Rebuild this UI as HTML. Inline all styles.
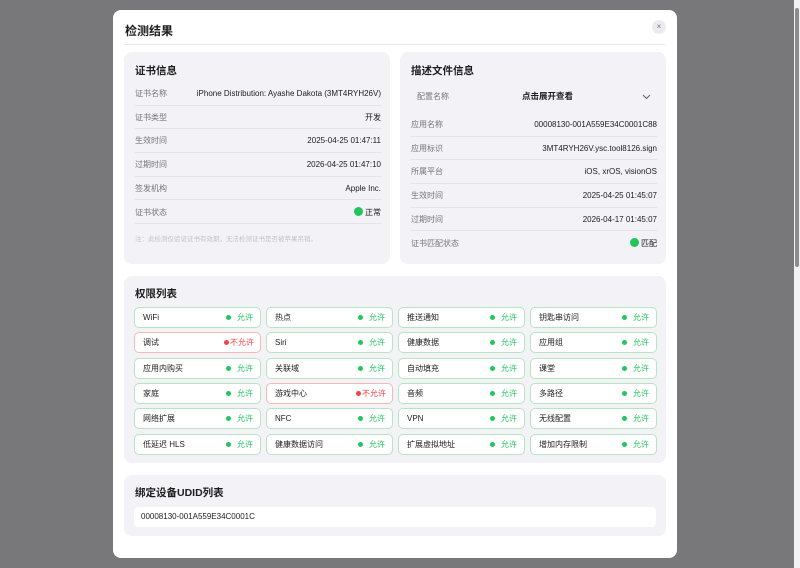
<!DOCTYPE html>
<html><head><meta charset="utf-8"><style>
*{margin:0;padding:0;box-sizing:border-box}
body{width:800px;height:568px;background:#78787a;font-family:"Liberation Sans","Noto Sans CJK SC",sans-serif;position:relative;overflow:hidden;color:#1d1d1f}
.sb{position:absolute;left:794px;top:0;width:6px;height:568px;background:#f2f2f2}
.sbt{position:absolute;left:795px;top:8px;width:4px;height:259px;background:#8c8c8c;border-radius:2px}
.modal{position:absolute;left:113px;top:10px;width:564px;height:548px;background:#fff;border-radius:8px}
.a{position:absolute}
.title{left:12px;top:12px;font-size:12px;font-weight:bold}
.hr{left:11px;top:34px;width:542px;height:1px;background:#e8e8ec}
.close{left:539px;top:10px;width:14px;height:14px;border-radius:7px;background:#ececf0;font-size:8px;color:#777;text-align:center;line-height:14px}
.card{position:absolute;background:#f2f2f7;border-radius:8px}
.ct{position:absolute;left:11px;top:11px;font-size:10.5px;font-weight:bold}
.row{position:absolute;left:11px;right:9px;height:23.7px;font-size:8px;line-height:23px;border-bottom:1px solid #e2e2e7}
.row .l{color:#777;position:absolute;left:0}
.row .v{position:absolute;right:0;color:#1d1d1f}
.g{color:#22c55e}
.dot{display:inline-block;width:9px;height:9px;border-radius:5px;background:#22c55e;vertical-align:-1px;margin-right:2px}
.p{position:absolute;width:127px;height:21px;background:#fff;border:1px solid #b6e6c1;border-radius:5px;font-size:8px;line-height:19px}
.p.r{border-color:#f5b8b8}
.p .n{position:absolute;left:8px}
.p .d{position:absolute;left:91px;top:7px;width:5px;height:5px;border-radius:3px;background:#22c55e}
.p .s{position:absolute;right:7px;color:#22c55e}
.p.r .d{left:89px;background:#ef4444}
.p.r .s{color:#ef4444;right:6px}
</style></head><body>
<div class="sb"></div><div class="sbt"></div>
<div class="modal">
<div class="a title">检测结果</div>
<div class="a close">×</div>
<div class="a hr"></div>

<div class="card" style="left:11px;top:42px;width:266px;height:212px">
<div class="ct">证书信息</div>
<div class="row" style="top:30px"><span class="l">证书名称</span><span class="v">iPhone Distribution: Ayashe Dakota (3MT4RYH26V)</span></div>
<div class="row" style="top:53.7px"><span class="l">证书类型</span><span class="v">开发</span></div>
<div class="row" style="top:77.4px"><span class="l">生效时间</span><span class="v">2025-04-25 01:47:11</span></div>
<div class="row" style="top:101.1px"><span class="l">过期时间</span><span class="v">2026-04-25 01:47:10</span></div>
<div class="row" style="top:124.8px"><span class="l">签发机构</span><span class="v">Apple Inc.</span></div>
<div class="row" style="top:148.5px"><span class="l">证书状态</span><span class="v g"><span class="dot"></span>正常</span></div>
<div class="a" style="left:11px;top:181px;font-size:6.5px;color:#c4c4c8">注：此检测仅验证证书有效期，无法检测证书是否被苹果吊销。</div>
</div>

<div class="card" style="left:287px;top:42px;width:266px;height:212px">
<div class="ct">描述文件信息</div>
<div class="a" style="left:17px;top:39px;font-size:8px;color:#777">配置名称</div>
<div class="a" style="left:122px;top:38px;font-size:8.5px;font-weight:bold">点击展开查看</div>
<svg class="a" style="left:242px;top:42px" width="9" height="6" viewBox="0 0 9 6"><path d="M1 1l3.5 3.5L8 1" fill="none" stroke="#666" stroke-width="1.1"/></svg>
<div class="row" style="top:61px"><span class="l">应用名称</span><span class="v">00008130-001A559E34C0001C88</span></div>
<div class="row" style="top:84.7px"><span class="l">应用标识</span><span class="v">3MT4RYH26V.ysc.tool8126.sign</span></div>
<div class="row" style="top:108.4px"><span class="l">所属平台</span><span class="v">iOS, xrOS, visionOS</span></div>
<div class="row" style="top:132.1px"><span class="l">生效时间</span><span class="v">2025-04-25 01:45:07</span></div>
<div class="row" style="top:155.8px"><span class="l">过期时间</span><span class="v">2026-04-17 01:45:07</span></div>
<div class="row" style="top:179.5px;border:none"><span class="l">证书匹配状态</span><span class="v g"><span class="dot"></span>匹配</span></div>
</div>

<div class="card" style="left:11px;top:266px;width:542px;height:187px">
<div class="ct" style="top:10px">权限列表</div>
<div class="p" style="left:10px;top:31px"><span class="n">WiFi</span><span class="d"></span><span class="s">允许</span></div>
<div class="p" style="left:142px;top:31px"><span class="n">热点</span><span class="d"></span><span class="s">允许</span></div>
<div class="p" style="left:274px;top:31px"><span class="n">推送通知</span><span class="d"></span><span class="s">允许</span></div>
<div class="p" style="left:406px;top:31px"><span class="n">钥匙串访问</span><span class="d"></span><span class="s">允许</span></div>
<div class="p r" style="left:10px;top:56.3px"><span class="n">调试</span><span class="d"></span><span class="s">不允许</span></div>
<div class="p" style="left:142px;top:56.3px"><span class="n">Siri</span><span class="d"></span><span class="s">允许</span></div>
<div class="p" style="left:274px;top:56.3px"><span class="n">健康数据</span><span class="d"></span><span class="s">允许</span></div>
<div class="p" style="left:406px;top:56.3px"><span class="n">应用组</span><span class="d"></span><span class="s">允许</span></div>
<div class="p" style="left:10px;top:81.6px"><span class="n">应用内购买</span><span class="d"></span><span class="s">允许</span></div>
<div class="p" style="left:142px;top:81.6px"><span class="n">关联域</span><span class="d"></span><span class="s">允许</span></div>
<div class="p" style="left:274px;top:81.6px"><span class="n">自动填充</span><span class="d"></span><span class="s">允许</span></div>
<div class="p" style="left:406px;top:81.6px"><span class="n">课堂</span><span class="d"></span><span class="s">允许</span></div>
<div class="p" style="left:10px;top:106.9px"><span class="n">家庭</span><span class="d"></span><span class="s">允许</span></div>
<div class="p r" style="left:142px;top:106.9px"><span class="n">游戏中心</span><span class="d"></span><span class="s">不允许</span></div>
<div class="p" style="left:274px;top:106.9px"><span class="n">音频</span><span class="d"></span><span class="s">允许</span></div>
<div class="p" style="left:406px;top:106.9px"><span class="n">多路径</span><span class="d"></span><span class="s">允许</span></div>
<div class="p" style="left:10px;top:132.2px"><span class="n">网络扩展</span><span class="d"></span><span class="s">允许</span></div>
<div class="p" style="left:142px;top:132.2px"><span class="n">NFC</span><span class="d"></span><span class="s">允许</span></div>
<div class="p" style="left:274px;top:132.2px"><span class="n">VPN</span><span class="d"></span><span class="s">允许</span></div>
<div class="p" style="left:406px;top:132.2px"><span class="n">无线配置</span><span class="d"></span><span class="s">允许</span></div>
<div class="p" style="left:10px;top:157.5px"><span class="n">低延迟 HLS</span><span class="d"></span><span class="s">允许</span></div>
<div class="p" style="left:142px;top:157.5px"><span class="n">健康数据访问</span><span class="d"></span><span class="s">允许</span></div>
<div class="p" style="left:274px;top:157.5px"><span class="n">扩展虚拟地址</span><span class="d"></span><span class="s">允许</span></div>
<div class="p" style="left:406px;top:157.5px"><span class="n">增加内存限制</span><span class="d"></span><span class="s">允许</span></div>
</div>

<div class="card" style="left:11px;top:465px;width:542px;height:61px">
<div class="ct" style="top:10px">绑定设备UDID列表</div>
<div class="a" style="left:10px;top:32px;width:522px;height:20px;background:#fff;border-radius:4px;font-size:8px;line-height:20px;padding-left:7px">00008130-001A559E34C0001C</div>
</div>
</div>
</body></html>
